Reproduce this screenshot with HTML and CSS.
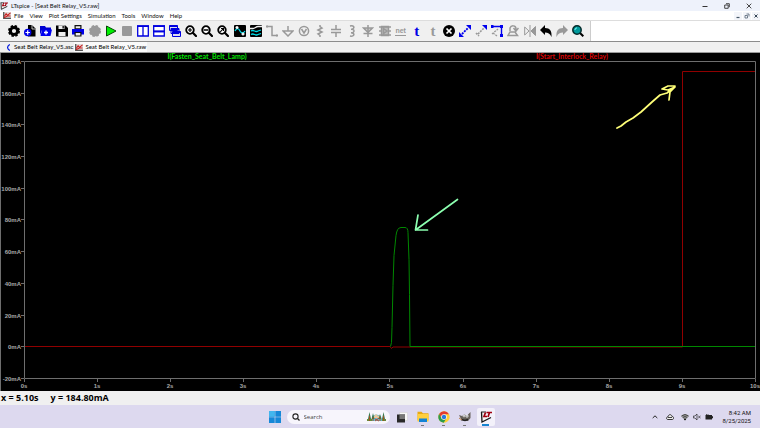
FILE: index.html
```html
<!DOCTYPE html>
<html lang="en">
<head>
<meta charset="utf-8">
<title>LTspice - [Seat Belt Relay_V5.raw]</title>
<link rel="stylesheet" href="styles.css">
</head>
<body>
<svg class="defs" aria-hidden="true">
  <symbol id="lt" viewBox="0 0 12 12"><path d="M1.500 1L2 11l9-4.500" fill="#f6f4f4" stroke="#161616" stroke-width="1.300"/><path d="M1 1h5" stroke="#222"/><path d="M5.500 1.500L4 5.500h3M6.500 1.500H12M9.500 1.500L8 6" fill="none" stroke="#a00010" stroke-width="1.700"/></symbol>
  <symbol id="wave" viewBox="0 0 9 8"><path d="M0 0h9v8H0z" fill="#555"/><path d="M1.500 0H9v6.500H1.500z" fill="#e4d8d8"/><path d="M1.500 5l2-3 1.500 2L8.500 1M1 6.500l4-2 3.500 0" fill="none" stroke="#c82020" stroke-width="1.200"/></symbol>
  <symbol id="mag" viewBox="0 0 12 12"><circle cx="5" cy="5" r="3.800" fill="#fff" stroke="#000" stroke-width="1.800"/><path d="M7.800 7.800L11 11" stroke="#000" stroke-width="2.200" stroke-linecap="round"/></symbol>
</svg>
<main class="app">
  <header class="title">
    <svg class="logo"><use href="#lt"/></svg>
    <h1>LTspice - [Seat Belt Relay_V5.raw]</h1>
    <div class="winbtns">
      <button aria-label="Minimize"><svg viewBox="0 0 6 6"><path d="M.5 3.500h5" stroke="#333"/></svg></button>
      <button aria-label="Restore"><svg viewBox="0 0 6 6"><path d="M.7 2h3.500v3.300H.7zM2 .7h3.300v3.500" fill="none" stroke="#333" stroke-width=".9"/></svg></button>
      <button aria-label="Close"><svg viewBox="0 0 6 6"><path d="M.7.7l4.600 4.600M5.300.7L.7 5.300" stroke="#333" stroke-width=".9"/></svg></button>
    </div>
  </header>
  <nav class="menu">
    <svg class="doc"><use href="#wave"/></svg>
    <button>File</button><button>View</button><button>Plot Settings</button><button>Simulation</button><button>Tools</button><button>Window</button><button>Help</button>
    <div class="docbtns">
      <button aria-label="Minimize document"><svg viewBox="0 0 6 6"><path d="M1.500 4.500h3" stroke="#456" stroke-width="1.200"/></svg></button>
      <button aria-label="Restore document"><svg viewBox="0 0 6 6"><path d="M1 2.500h2.500V5H1zM2.500 1H5v2.500" fill="none" stroke="#567" stroke-width=".8"/></svg></button>
      <button aria-label="Close document"><svg viewBox="0 0 6 6"><path d="M1.500 1.500l3 3M4.500 1.500l-3 3" stroke="#345" stroke-width="1"/></svg></button>
    </div>
  </nav>
  <div class="toolrow">
    <div class="tools" role="toolbar" aria-label="Main toolbar">
      <button aria-label="Settings"><svg viewBox="0 0 12 12"><circle cx="6" cy="6" r="3.600" fill="none" stroke="#000" stroke-width="3"/><circle cx="6" cy="6" r="5" fill="none" stroke="#000" stroke-width="2" stroke-dasharray="2.400 1.530"/></svg></button>
      <button aria-label="New schematic"><svg viewBox="0 0 12 12"><path d="M4 0h4l3.500 3.500V11.500H4z"/><path d="M8 0v4h3.500" fill="none" stroke="#eee" stroke-width=".8"/><circle cx="3.700" cy="7.500" r="3.700" fill="#0000e6"/><path d="M1.500 7.500h4.400M3.700 5.300v4.400" stroke="#fff" stroke-width="1.200"/></svg></button>
      <button aria-label="Open"><svg viewBox="0 0 12 12"><path d="M0 1h5l1 1.500h5V5H2L0 10z" fill="#0000d0"/><path d="M2 4.500h10L10.500 11H.5z" fill="#0000f0"/><path d="M4 7.500h4M6 5.500v4" stroke="#fff" stroke-width="1.300"/></svg></button>
      <button aria-label="Save"><svg viewBox="0 0 12 12"><path d="M0 .5h9.500L12 3v8.500H0z"/><path d="M2.500.5h6V4h-6zM2.500 7h7v4h-7z" fill="#eee"/><path d="M6.500 1h1.300v2.500H6.500z"/></svg></button>
      <button aria-label="Print"><svg viewBox="0 0 12 12"><path d="M2.500 0h7v4h-7z" fill="#111"/><path d="M0 4h12v5.500H0z" fill="#0000e8"/><path d="M2.500 7h7v4.500h-7z" fill="#111"/><path d="M3.700 8h4.600v2.500H3.700zM3.700 1.200h4.600v2H3.700z" fill="#eee"/></svg></button>
      <button aria-label="Configure" disabled><svg viewBox="0 0 12 12"><circle cx="6" cy="6" r="5.300" fill="#999"/><circle cx="6" cy="6" r="5" fill="none" stroke="#999" stroke-width="2" stroke-dasharray="2.400 1.530"/></svg></button>
      <button aria-label="Run"><svg viewBox="0 0 12 12"><path d="M1.500 1L11 6l-9.500 5z" fill="#00f000" stroke="#064806" stroke-linejoin="round"/></svg></button>
      <button aria-label="Halt" disabled><svg viewBox="0 0 12 12"><rect x="1" y="1" width="10" height="10" rx="1" fill="#999"/></svg></button>
      <button aria-label="Tile vertically"><svg viewBox="0 0 12 12"><path d="M.7 1h10.600v10H.7zM6 1v10" fill="#fff" stroke="#0000e0" stroke-width="1.300"/><path d="M0 1.200h12" stroke="#0000e0" stroke-width="1.600"/></svg></button>
      <button aria-label="Tile horizontally"><svg viewBox="0 0 12 12"><path d="M.7 1h10.600v10H.7zM1 6.500h10" fill="#fff" stroke="#0000e0" stroke-width="1.300"/><path d="M0 1.200h12M0 6.300h12" stroke="#0000e0" stroke-width="1.800"/></svg></button>
      <button aria-label="Cascade"><svg viewBox="0 0 12 12"><g fill="#dde" stroke="#0000e0"><path d="M.5.5h8v5h-8zM2 3.500h8v5H2zM3.500 6.500h8v5h-8z"/></g><path d="M.5 1.200h8M2 4.200h8M3.500 7.200h8" stroke="#0000e0" stroke-width="1.500"/></svg></button>
      <button aria-label="Zoom in"><svg viewBox="0 0 12 12"><use href="#mag"/><path d="M3 5h4M5 3v4" stroke="#000" stroke-width="1.200"/></svg></button>
      <button aria-label="Zoom out"><svg viewBox="0 0 12 12"><use href="#mag"/><path d="M2.500 5h5" stroke="#000" stroke-width="1.500"/></svg></button>
      <button aria-label="Zoom to fit"><svg viewBox="0 0 12 12"><use href="#mag"/><path d="M3.200 6.800l3-3M4 3.500h2.500V6" fill="none" stroke="#000" stroke-width="1.100"/></svg></button>
      <button aria-label="Autorange"><svg viewBox="0 0 12 12"><rect width="12" height="12" rx="1"/><path d="M1 6c2-4 4-2 5 0s3 3 5 0" fill="none" stroke="#00dce8" stroke-width="1.300"/><path d="M3 1v3M1.500 2.500h3M7.500 9h3M9 7.500v3" stroke="#fff" stroke-width="1.400"/></svg></button>
      <button aria-label="Plot panes"><svg viewBox="0 0 12 12"><rect width="12" height="12" rx="1"/><path d="M0 3.500h3c2 0 3-2 5-2h4" fill="none" stroke="#eee" stroke-width="1.300"/><path d="M1 6c3-2 4 2 7 0l3-1M1 9.500c3-2 4 2 7 0l3-1" fill="none" stroke="#00dce8" stroke-width="1.300"/></svg></button>
      <button aria-label="Wire" disabled><svg viewBox="0 0 12 12" class="line"><path d="M1 1.500h5v9h5"/><path d="M0 .5h2v2H0zM10 9.500h2v2h-2z" fill="#999" stroke="none"/></svg></button>
      <button aria-label="Ground" disabled><svg viewBox="0 0 12 12" class="line"><path d="M6 1v5M1 6h10L6 11z"/></svg></button>
      <button aria-label="Voltage" disabled><svg viewBox="0 0 12 12" class="line"><circle cx="6" cy="6" r="4.600"/><path d="M3.500 4L6 8l2.500-4"/></svg></button>
      <button aria-label="Resistor" disabled><svg viewBox="0 0 12 12" class="line"><path d="M6 0v1.500L8 3 4 5l4 2-4 2 2 1.500V12"/></svg></button>
      <button aria-label="Capacitor" disabled><svg viewBox="0 0 12 12" class="line"><path d="M6 0v4M1 4.500h10M1 7.500h10M6 8v4"/></svg></button>
      <button aria-label="Inductor" disabled><svg viewBox="0 0 12 12" class="line"><path d="M4 1c5-1 5 3 1 3.200C9 4 9 8 5 7.700c4 0 4 4.200-1 3.300"/></svg></button>
      <button aria-label="Diode" disabled><svg viewBox="0 0 12 12" class="line"><path d="M6 0v12M1.500 3h9L6 7.500zM1.500 8.500h9" fill="#ccc"/></svg></button>
      <button aria-label="Component" disabled><svg viewBox="0 0 12 12" class="line"><path d="M2.500 1.500h7v9h-7z" fill="#bbb"/><path d="M0 2h12M0 6h3M0 10h12M4.500 3.500L8 6 4.500 8.500zM9 6h3"/></svg></button>
      <button class="net" aria-label="Net name" disabled>net</button>
      <button class="text blue" aria-label="Text">t</button>
      <button class="text" aria-label="SPICE directive" disabled>t</button>
      <button aria-label="Delete"><svg viewBox="0 0 12 12"><circle cx="6" cy="6" r="6"/><path d="M3.500 3.500l5 5M8.500 3.500l-5 5" stroke="#fff" stroke-width="1.700"/></svg></button>
      <button aria-label="Move"><svg viewBox="0 0 12 12"><path d="M3 9l6-6" stroke="#00e" stroke-width="1.800" stroke-dasharray="2 1"/><path d="M7 0h5v5zM0 7l5 5H0z" fill="#00e"/></svg></button>
      <button aria-label="Copy" disabled><svg viewBox="0 0 12 12"><path d="M3 9l6-6M1 8l3 3" stroke="#999" stroke-width="1.600" stroke-dasharray="2 1"/><path d="M7 0h5v5z" fill="#00e"/></svg></button>
      <button aria-label="Drag"><svg viewBox="0 0 12 12"><path d="M0 1.500h10.500v9" fill="none" stroke="#00e" stroke-width="1.400"/><path d="M9 0h3v3H9zM9 9h3v3H9zM0 0h2.500v3H0z" fill="#00e"/><path d="M1 9l6-5M2 8l4 3" stroke="#999" stroke-width="1.300" stroke-dasharray="2 1"/></svg></button>
      <button aria-label="Rotate" disabled><svg viewBox="0 0 12 12" class="line"><path d="M1 10.500h9.500L8 7H3zM3 6V3c1-3 6-3 6 1v1M6.500 3L9 6l2.500-3"/></svg></button>
      <button aria-label="Mirror" disabled><svg viewBox="0 0 12 12" class="line thin"><path d="M.7 2v8L5 6zM6 0v12"/><path d="M11.500 1.500v9L7 6z" fill="#999"/></svg></button>
      <button aria-label="Undo"><svg viewBox="0 0 12 12"><path d="M0 5l5-5v3c5 0 7 3 6.500 9C10 8.500 8 7.500 5 7.500V10z"/></svg></button>
      <button aria-label="Redo" disabled><svg viewBox="0 0 12 12"><path d="M12 5L7 0v3C2 3 0 6 .5 12 2 8.500 4 7.500 7 7.500V10z" fill="#999"/></svg></button>
      <button aria-label="Search"><svg viewBox="0 0 12 12"><path d="M8 8l3.300 3.300" stroke="#000" stroke-width="2"/><circle cx="5" cy="5" r="4.200" fill="#009a9c" stroke="#052b2b" stroke-width="1.500"/><path d="M3 5c0-1.500 1-2 2-2" stroke="#8ff" fill="none"/></svg></button>
    </div>
  </div>
  <div class="tabs">
    <button class="tab"><svg viewBox="0 0 9 8"><path d="M6.500.5Q1.500 4 6.500 7.500" fill="none" stroke="#0018e0" stroke-width="1.400"/></svg>Seat Belt Relay_V5.asc</button>
    <button class="tab active"><svg><use href="#wave"/></svg>Seat Belt Relay_V5.raw</button>
  </div>
  <section class="plot">
    <svg viewBox="0 0 760 338" role="img" aria-label="Relay current against time">
      <g class="axis">
        <path d="M.5 0v338M24.500 8.500h731v317H24.500z"/>
        <path d="M21 8.500h3M21 40.500h3M21 71.500h3M21 103.500h3M21 135.500h3M21 166.500h3M21 198.500h3M21 230.500h3M21 262.500h3M21 293.500h3M21 325.500h3"/>
        <path d="M24.500 326v3M97.500 326v3M170.500 326v3M243.500 326v3M316.500 326v3M389.500 326v3M463.500 326v3M536.500 326v3M609.500 326v3M682.500 326v3M755.500 326v3"/>
      </g>
      <g class="ylab">
        <text x="21" y="11">180mA</text><text x="21" y="43">160mA</text><text x="21" y="74">140mA</text><text x="21" y="106">120mA</text><text x="21" y="138">100mA</text><text x="21" y="169">80mA</text><text x="21" y="201">60mA</text><text x="21" y="233">40mA</text><text x="21" y="265">20mA</text><text x="21" y="296">0mA</text><text x="21" y="328">-20mA</text>
      </g>
      <g class="xlab">
        <text x="24" y="335">0s</text><text x="97" y="335">1s</text><text x="170" y="335">2s</text><text x="243" y="335">3s</text><text x="316" y="335">4s</text><text x="390" y="335">5s</text><text x="463" y="335">6s</text><text x="536" y="335">7s</text><text x="609" y="335">8s</text><text x="682" y="335">9s</text><text x="755" y="335">10s</text>
      </g>
      <text class="name green" x="207" y="6">I(Fasten_Seat_Belt_Lamp)</text>
      <text class="name red" x="572" y="6">I(Start_Interlock_Relay)</text>
      <path class="trace redline" d="M25 293.500H390l1.500 2 1.500-1.500H682.500V18.500H755"/>
      <path class="trace greenline" d="M390.500 293.500l1-4 .5-15 1-42 1-30 2-20q1-8 5-8h4q3 0 3 5l1 27 .5 35 .5 52H755"/>
      <path class="mark mint" d="M457.500 146.500L415.500 177M418 162l-2.500 15 12 0"/>
      <path class="mark lemon" d="M617 75l4-2 5-4 7-4 8-6 11-10 8-7 7-2 6-5M675 33l-7 0-6 3 6 1 7-3-5 5-1 8"/>
    </svg>
  </section>
  <footer class="status"><span>x = 5.10s</span><span>y = 184.80mA</span></footer>
  <nav class="taskbar" aria-label="Taskbar">
    <div class="dock">
      <button class="app-icon start" aria-label="Start"><svg viewBox="0 0 12 12"><path d="M0 0h5.700v5.700H0zM6.300 0H12v5.700H6.300zM0 6.300h5.700V12H0zM6.300 6.300H12V12H6.300z" fill="#1688d8"/><path d="M0 0h5.700v5.700H0z" fill="#42b6ee"/></svg></button>
      <label class="search"><svg viewBox="0 0 8 8"><circle cx="3.500" cy="3.500" r="2.600" fill="none" stroke="#222" stroke-width="1.100"/><path d="M5.500 5.500l2 2" stroke="#222" stroke-width="1.200"/></svg><input type="text" placeholder="Search" aria-label="Search"><svg class="scene" viewBox="0 0 19 11"><path d="M0 8h19v2H0z" fill="#6a8a38"/><path d="M5 5q4-3 9 0l1 5H5z" fill="#63bcd8"/><path d="M7 5l2-2 2 2 2-1v3H7z" fill="#e7c69c"/><path d="M2.500 1L1 8h3zM6 2L4.500 8h3zM16.500 1L15 8h3zM13 3l-1.500 5h3z" fill="#3c7a50"/><path d="M2.500 5v5M16.500 5v5M6 6v4M13 6v4" stroke="#9a5424" stroke-width="1"/><path d="M8 8l4 2M12 7l-4 3" stroke="#b34b32"/></svg></label>
      <button class="app-icon" aria-label="Task view"><svg viewBox="0 0 12 12"><path d="M3.500 1.500h8v8h-8z" fill="#f8f8f8" stroke="#ccc" stroke-width=".5"/><path d="M1 3.500h8V11.500H1z" fill="#292929"/><path d="M3.500 3.500H9V8H3.500z" fill="#777"/></svg></button>
      <button class="app-icon run" aria-label="File Explorer"><svg viewBox="0 0 12 12"><path d="M.5.7h4l1.500 1.600h5.500v7H.5z" fill="#e8a914"/><path d="M.5 3h11v7.500H.5z" fill="#ffcf3d"/><path d="M2 7.500h8v3.500H2z" fill="#1383d6"/></svg></button>
      <button class="app-icon run" aria-label="Chrome"><svg viewBox="0 0 12 12"><circle cx="6" cy="6" r="5.700" fill="#ffd034"/><path d="M1.100 3.100A5.700 5.700 0 0 1 11 3.300H6L3.700 7.500z" fill="#e43b2e"/><path d="M1.100 3.100A5.700 5.700 0 0 0 5.700 11.700L8.300 7.500 6 9 3.600 7.400z" fill="#2b9b4b"/><circle cx="6" cy="6" r="2.800" fill="#fff"/><circle cx="6" cy="6" r="2.200" fill="#2879dd"/></svg></button>
      <button class="app-icon run" aria-label="GIMP"><svg viewBox="0 0 12 12"><path d="M0 4l3 1 2-1.500 3 1L11.500 1v6L9 10H5L2 8z" fill="#67615a"/><circle cx="5" cy="5" r="1.300" fill="#fff"/><circle cx="8" cy="5" r="1.500" fill="#fff"/><circle cx="5" cy="5" r=".6"/><circle cx="8" cy="5" r=".6"/><path d="M2 8.500l4 1 3-1" stroke="#222" fill="none" stroke-width="1.500"/><path d="M0 7l3 2" stroke="#bd824d"/></svg></button>
      <button class="app-icon current" aria-label="LTspice"><svg><use href="#lt"/></svg></button>
    </div>
    <div class="tray">
      <button aria-label="Hidden icons"><svg viewBox="0 0 8 8"><path d="M1.700 5L4 2.800 6.300 5" fill="none" stroke="#222"/></svg></button>
      <button class="cloud" aria-label="OneDrive"><svg viewBox="0 0 8 8"><path d="M2 6.500C0 6.500 0 4 2 3.800 2.500 1 5.500 1 6 3.500c2.300 0 2.300 3 0 3z" fill="#eee" stroke="#222" stroke-width=".9"/><path d="M2 4.500h4" stroke="#444"/></svg></button>
      <button aria-label="Wi-Fi"><svg viewBox="0 0 8 8"><path d="M0 3q4-4 8 0L4 7.500z" fill="#999"/><path d="M.5 3q3.500-3 7 0M1.800 4.500q2.200-2 4.400 0" fill="none" stroke="#222" stroke-width=".7"/><circle cx="4" cy="6.300" r=".9"/></svg></button>
      <button aria-label="Muted"><svg viewBox="0 0 8 8"><path d="M.4 3h1.500L4 1v6L1.900 5H.4zM5.300 3l2.200 2M7.500 3L5.300 5" fill="none" stroke="#222" stroke-width=".7"/></svg></button>
      <button aria-label="Battery"><svg viewBox="0 0 8 8"><path d="M.5 2h6.500v4.500H.5zM7 3.200h1v2H7z" fill="#222"/><path d="M1.500 1v3M3 1v3" stroke="#222" stroke-width=".7"/></svg></button>
      <div class="clock"><time>8:42 AM</time><time>8/25/2025</time></div>
    </div>
  </nav>
</main>
</body>
</html>
```
FILE: styles.css
```css
* { box-sizing: border-box; }
body { margin: 0; background: #000; font: 6px/8px Lato, "Noto Sans", sans-serif; color: #111; }
button { border: 0; padding: 0; margin: 0; background: none; font: inherit; color: inherit; display: flex; align-items: center; justify-content: center; }
svg { display: block; flex: none; }
.defs { position: absolute; width: 0; height: 0; }
.app { display: flex; flex-direction: column; min-height: 100vh; }

.title { display: flex; align-items: center; height: 11px; background: #eef2fb; gap: 3px; }
.title h1 { margin: 0; font: inherit; color: #111; }
.logo { width: 8px; height: 8px; }
.winbtns { margin-left: auto; display: flex; gap: 16px; padding-right: 8px; }
.winbtns svg { width: 6px; height: 6px; }

.menu { display: flex; align-items: center; height: 10px; background: #fff; border-bottom: 1px solid #ddd; gap: 6px; padding-left: 3px; }
.doc { width: 8px; height: 7px; margin-right: -3px; }
.docbtns { margin-left: auto; display: flex; gap: 1px; }
.docbtns button { width: 8px; height: 8px; background: #f3f5fa; }
.docbtns svg { width: 6px; height: 6px; }

.toolrow { background: #fff; border-bottom: 1px solid #8c8c8c; height: 21px; display: flex; }
.tools { display: grid; grid-template-columns: repeat(36, 1fr); width: 591px; background: #f0f0f0; border-right: 1px solid #ccc; padding: 0 4px 0 6px; align-items: center; }
.tools svg { width: 12px; height: 12px; }
.line { fill: none; stroke: #999; stroke-width: 1.5; }
.thin { stroke-width: 1; }
.net { font: bold 7px/8px "Liberation Sans", sans-serif; color: #999; justify-self: center; border-bottom: 1px solid #999; }
.text { font: bold 15px/12px "Liberation Serif", serif; color: #999; }
.blue { color: #0000e6; }

.tabs { display: flex; height: 11px; background: #f0f0f0; border-bottom: 1px solid #999; padding-left: 3px; color: #000; }
.tab { gap: 2px; padding: 0 1px; }
.tab svg { width: 8px; height: 7px; }
.active { background: #fafafa; }

.plot { background: #000; }
.plot svg { width: 100%; height: auto; }
.axis { fill: none; stroke: #6e6e6e; }
.plot text { font: bold 6px "Liberation Sans", sans-serif; fill: #a8a8a8; }
.plot .name { font: bold 7px Lato, sans-serif; text-anchor: middle; }
.plot .green { fill: #00e000; }
.plot .red { fill: #d80000; }
.ylab { text-anchor: end; }
.xlab { text-anchor: middle; }
.trace { fill: none; stroke-width: 1; }
.redline { stroke: #900000; }
.greenline { stroke: #008800; }
.mark { fill: none; stroke-width: 1.7; stroke-linecap: round; stroke-linejoin: round; }
.mint { stroke: #8cffb0; }
.lemon { stroke: #ffff78; }

.status { display: flex; align-items: center; gap: 12px; height: 14px; background: #f0f0f0; padding-left: 1px; font: bold 9px/12px "Open Sans", sans-serif; color: #000; }
.taskbar { display: grid; grid-template-columns: 1fr auto 1fr; flex: 1; align-items: center; min-height: 23px; background: #ddd9ef; padding: 0 9px; }
.dock { grid-column: 2; display: flex; align-items: center; gap: 3px; }
.app-icon { position: relative; width: 18px; height: 18px; border-radius: 2px; }
.app-icon svg { width: 12px; height: 12px; }
.run::after, .current::after { content: ""; position: absolute; bottom: 0; width: 3px; height: 1px; background: #777; }
.current { background: #f3f1fa; }
.current::after { width: 7px; height: 2px; background: #1683d0; }
.search { display: flex; align-items: center; gap: 4px; width: 103px; height: 14px; border-radius: 7px; background: #f7f5fc; padding: 0 4px 0 5px; }
.search svg { width: 8px; height: 8px; }
.search .scene { width: 19px; height: 11px; }
.search input { flex: 1; min-width: 0; border: 0; padding: 0; background: none; outline: 0; font: 6px/10px "Open Sans", sans-serif; }
.search input::placeholder { color: #444; opacity: 1; }
.tray { grid-column: 3; justify-self: end; display: flex; align-items: center; gap: 4px; }
.tray svg { width: 8px; height: 8px; }
.cloud { margin: 0 3px; }
.clock { display: flex; flex-direction: column; text-align: right; font-family: Roboto, sans-serif; margin-left: 5px; }
```
